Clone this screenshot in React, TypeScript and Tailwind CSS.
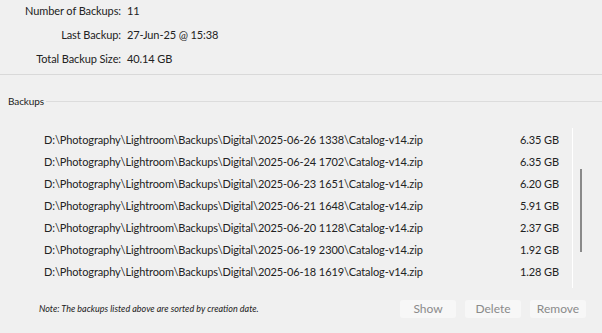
import React from 'react'

const BACKUPS = [
  { path: 'D:\\Photography\\Lightroom\\Backups\\Digital\\2025-06-26 1338\\Catalog-v14.zip', size: '6.35 GB' },
  { path: 'D:\\Photography\\Lightroom\\Backups\\Digital\\2025-06-24 1702\\Catalog-v14.zip', size: '6.35 GB' },
  { path: 'D:\\Photography\\Lightroom\\Backups\\Digital\\2025-06-23 1651\\Catalog-v14.zip', size: '6.20 GB' },
  { path: 'D:\\Photography\\Lightroom\\Backups\\Digital\\2025-06-21 1648\\Catalog-v14.zip', size: '5.91 GB' },
  { path: 'D:\\Photography\\Lightroom\\Backups\\Digital\\2025-06-20 1128\\Catalog-v14.zip', size: '2.37 GB' },
  { path: 'D:\\Photography\\Lightroom\\Backups\\Digital\\2025-06-19 2300\\Catalog-v14.zip', size: '1.92 GB' },
  { path: 'D:\\Photography\\Lightroom\\Backups\\Digital\\2025-06-18 1619\\Catalog-v14.zip', size: '1.28 GB' },
]

const STATS = [
  { label: 'Number of Backups:', value: '11' },
  { label: 'Last Backup:', value: '27-Jun-25 @ 15:38' },
  { label: 'Total Backup Size:', value: '40.14 GB' },
]

export default function App() {
  return (
    <div
      className="w-[602px] h-[333px] overflow-hidden bg-[#f0f0f0] text-[#222] text-[11px] tracking-[-0.1px]"
      style={{ fontFamily: 'Lato, "Open Sans", sans-serif' }}
    >
      {/* Summary */}
      <div className="flex flex-col gap-[6px] pt-[2px] h-[74px]">
        {STATS.map((s) => (
          <div key={s.label} className="flex items-center h-[18px]">
            <span className="w-[121px] text-right">{s.label}</span>
            <span className="ml-[6px]">{s.value}</span>
          </div>
        ))}
      </div>
      <div className="h-px bg-[#d9d9d9]" />

      {/* Backups group */}
      <div className="flex items-center mt-[19px] h-[14px]">
        <span className="pl-[8px] pr-[2px] text-[10px] leading-none">Backups</span>
        <div className="flex-1 h-px bg-[#dcdcdc]" />
      </div>

      <div className="flex mt-[20px] h-[160px]">
        <div className="w-[572px] flex flex-col pt-[1px]">
          {BACKUPS.map((b) => (
            <div key={b.path} className="flex items-center h-[22px] pl-[44px] pr-[13px]">
              <span className="flex-1 whitespace-nowrap">{b.path}</span>
              <span>{b.size}</span>
            </div>
          ))}
        </div>
        <div className="w-px bg-white" />
        <div className="flex-1">
          <div className="w-[2px] bg-[#8a8a8a] mt-[41px] h-[83px] ml-[7px]" />
        </div>
      </div>

      {/* Footer */}
      <div className="flex items-center mt-[12px] pl-[39px] pr-[16px]">
        <span className="flex-1 italic text-[9px] tracking-normal">Note: The backups listed above are sorted by creation date.</span>
        <div className="flex gap-[9px]">
          {['Show', 'Delete', 'Remove'].map((t) => (
            <button
              key={t}
              className="w-[56px] h-[18px] rounded-[3px] bg-[#f7f7f7] text-[#8a8a8a] text-[12px] leading-none tracking-normal"
            >
              {t}
            </button>
          ))}
        </div>
      </div>
    </div>
  )
}
